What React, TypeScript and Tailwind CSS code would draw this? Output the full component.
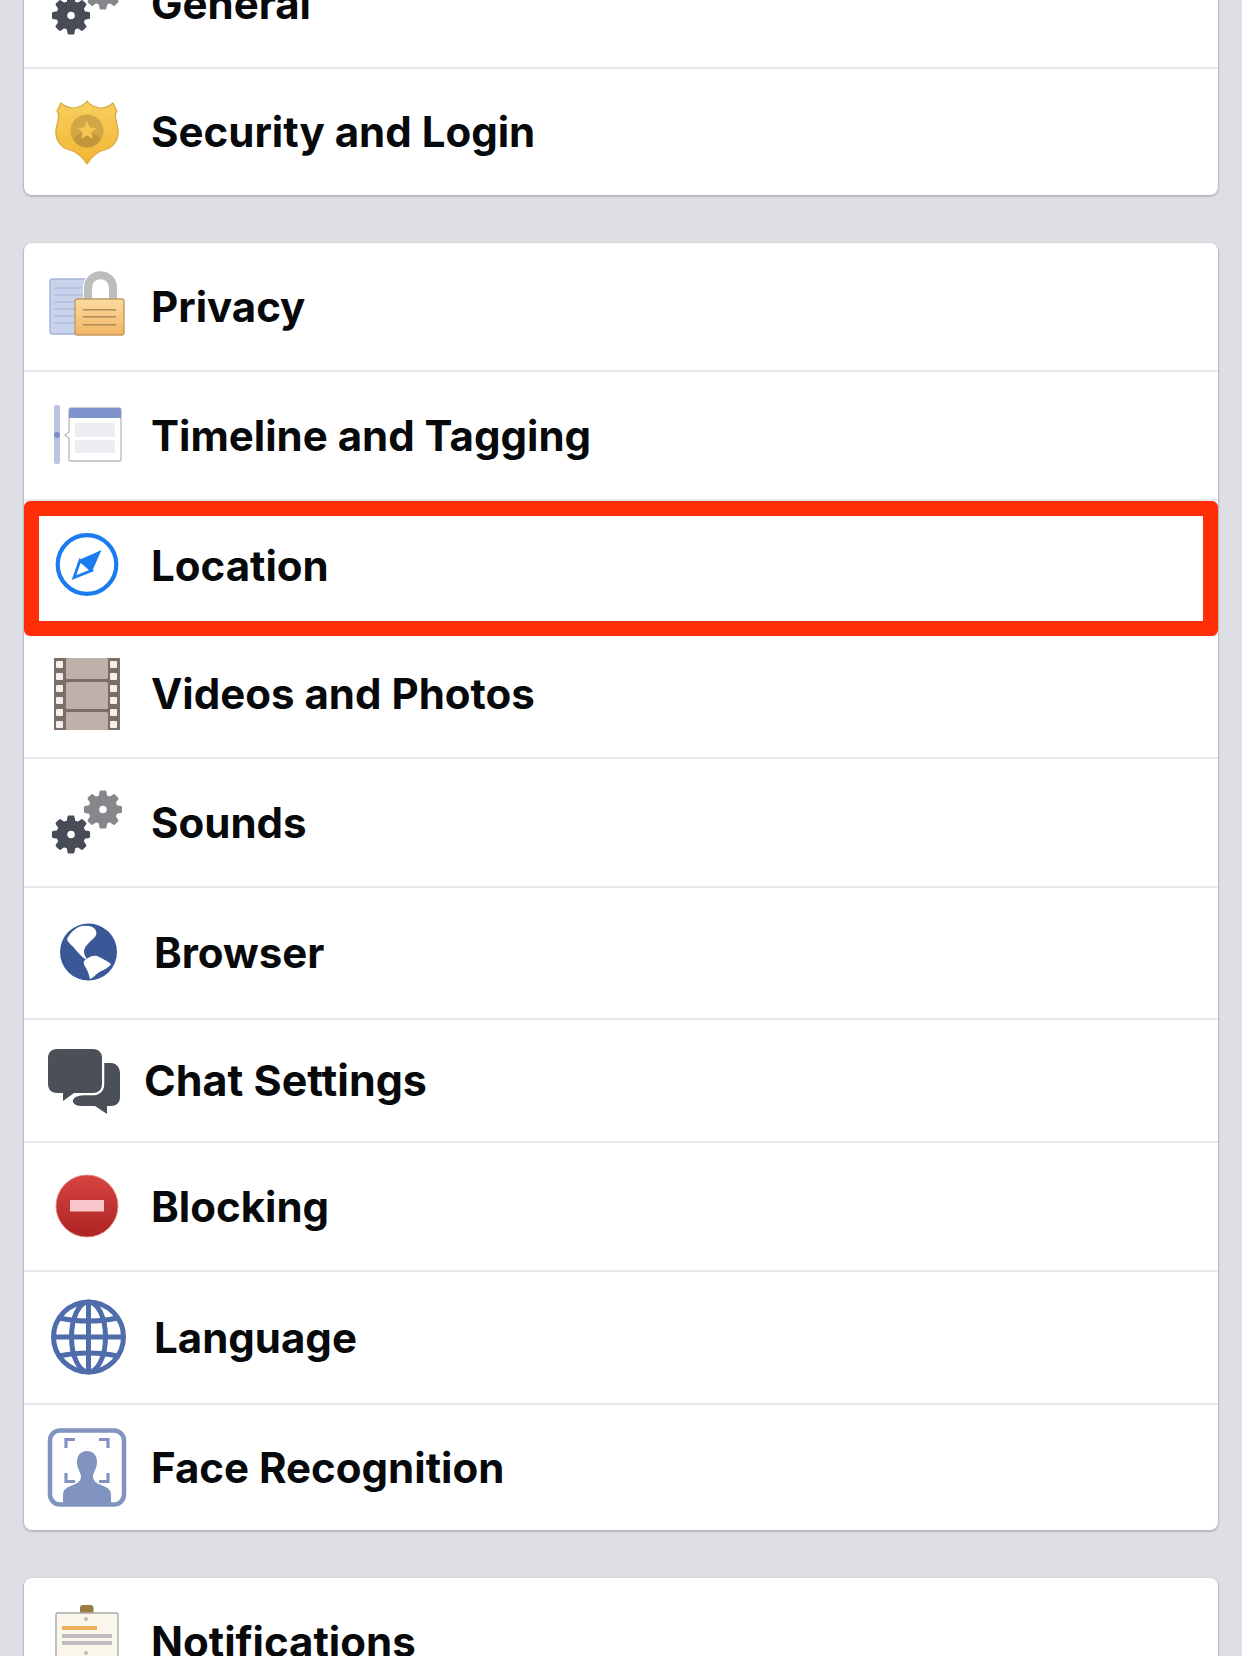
import React from "react";

function gear(cx: number, cy: number, R: number, r: number, n: number, hole: number) {
  const pts: string[] = [];
  for (let i = 0; i < n; i++) {
    const a = (i / n) * Math.PI * 2 - Math.PI / 2;
    const w = (Math.PI * 2) / n;
    const p = (rad: number, t: number) => `${(cx + rad * Math.cos(t)).toFixed(2)} ${(cy + rad * Math.sin(t)).toFixed(2)}`;
    pts.push(`${i === 0 ? "M" : "L"}${p(r, a - w * 0.3)}`);
    pts.push(`L${p(R, a - w * 0.16)}`);
    pts.push(`L${p(R, a + w * 0.16)}`);
    pts.push(`L${p(r, a + w * 0.3)}`);
  }
  pts.push("Z");
  pts.push(`M${cx - hole} ${cy}a${hole} ${hole} 0 1 0 ${hole * 2} 0a${hole} ${hole} 0 1 0 ${-hole * 2} 0Z`);
  return pts.join("");
}

const Box = ({ children, defs }: { children: React.ReactNode; defs?: React.ReactNode }) => (
  <svg width="84" height="84" viewBox="-42 -42 84 84" className="block overflow-visible">
    {defs ? <defs>{defs}</defs> : null}
    {children}
  </svg>
);

const Gears = () => (
  <Box>
    <path d={gear(16, -13.5, 18, 13.5, 8, 5)} fill="#85878b" fillRule="evenodd" stroke="#85878b" strokeWidth="2.4" strokeLinejoin="round" />
    <path d={gear(-16, 11.5, 18, 13.5, 8, 5)} fill="#474c57" fillRule="evenodd" stroke="#474c57" strokeWidth="2.4" strokeLinejoin="round" />
  </Box>
);

const Shield = () => (
  <Box
    defs={
      <linearGradient id="sh" x1="0" y1="0" x2="0" y2="1">
        <stop offset="0" stopColor="#f7cf5e" />
        <stop offset="1" stopColor="#f2b632" />
      </linearGradient>
    }
  >
    <path d="M-26 -29 C-21 -24 -14 -23 -9 -25 C-5 -26 -2 -28 0 -31 C2 -28 5 -26 9 -25 C14 -23 21 -24 26 -29 L30 -21 C26 -17 30 -9 31 -3 C32 6 28 14 20 17 C12 19 5 24 0 32 C-5 24 -12 19 -20 17 C-28 14 -32 6 -31 -3 C-30 -9 -26 -17 -30 -21 Z" fill="url(#sh)" stroke="#d8a941" strokeWidth="1.2" strokeLinejoin="round" />
    <circle cx="0" cy="-1" r="16.5" fill="#d2a745" />
    <path d="M-14 7 C-9 1 -4 0 0 0 C4 0 9 1 14 7 C10 13 5 15.5 0 15.5 C-5 15.5 -10 13 -14 7 Z" fill="#c2963a" />
    <path d="M0 -11 L2.8 -4.6 L9.5 -4 L4.4 .4 L6 7 L0 3.5 L-6 7 L-4.4 .4 L-9.5 -4 L-2.8 -4.6 Z" fill="#f3c653" />
  </Box>
);

const Lock = () => (
  <Box
    defs={
      <linearGradient id="lk" x1="0" y1="0" x2="0" y2="1">
        <stop offset="0" stopColor="#fbdca0" />
        <stop offset="1" stopColor="#f1b563" />
      </linearGradient>
    }
  >
    <rect x="-37" y="-28" width="40" height="55" rx="2.5" fill="#c9d3ec" stroke="#a7b3d8" strokeWidth="1.4" />
    {[-20, -13, -6, 1, 8, 15].map((y) => (
      <rect key={y} x="-33" y={y} width="30" height="2" fill="#b7c3e0" />
    ))}
    <path d="M1 -6 V-19 C1 -36 26 -36 26 -19 V-6" fill="none" stroke="#fff" strokeWidth="10" />
    <path d="M1 -6 V-19 C1 -36 26 -36 26 -19 V-6" fill="none" stroke="#bdbdbf" strokeWidth="8" />
    <rect x="-12" y="-8" width="49" height="36" rx="2.5" fill="url(#lk)" stroke="#c29a63" strokeWidth="1.4" />
    {[2, 9, 17].map((y) => (
      <rect key={y} x="-4" y={y} width="33" height="1.6" fill="#b18d58" />
    ))}
  </Box>
);

const TimelineIcon = () => (
  <Box>
    <rect x="-33" y="-31" width="6" height="59" rx="2" fill="#bcc5e0" />
    <circle cx="-30" cy="-1" r="3" fill="#7d8ec5" />
    <path d="M-18 -26 a2 2 0 0 1 2 -2 h48 a2 2 0 0 1 2 2 v49 a2 2 0 0 1 -2 2 h-48 a2 2 0 0 1 -2 -2 v-21 l-4 -3 l4 -3 Z" fill="#fff" stroke="#b9bcc2" strokeWidth="1.4" />
    <path d="M-18 -26 a2 2 0 0 1 2 -2 h48 a2 2 0 0 1 2 2 v8 h-52 Z" fill="#7f94cc" />
    <rect x="-12" y="-13" width="40" height="14" fill="#eceef1" />
    <rect x="-12" y="4" width="40" height="13" fill="#eceef1" />
  </Box>
);

const Compass = () => (
  <Box>
    <g transform="translate(0 -1.5)">
      <circle cx="0" cy="0" r="29.3" fill="none" stroke="#1a7cf0" strokeWidth="4.2" />
      <path d="M14.5 -14.5 L-8 -4.5 L5 7 Z" fill="#1a7cf0" />
      <path d="M-7 -4 L-13 13 L4.5 6 Z" fill="#fff" stroke="#1a7cf0" strokeWidth="2.8" strokeLinejoin="miter" />
    </g>
  </Box>
);

const Film = () => (
  <Box>
    <rect x="-33" y="-36" width="66" height="72" fill="#7b6e67" />
    <rect x="-21" y="-36" width="42" height="21" rx="1.5" fill="#bdb1a9" />
    <rect x="-21" y="-12" width="42" height="27" rx="1.5" fill="#bdb1a9" />
    <rect x="-21" y="18" width="42" height="18" rx="1.5" fill="#bdb1a9" />
    {[-33, -21, -9, 3, 15, 27].map((y) => (
      <React.Fragment key={y}>
        <rect x="-31" y={y} width="7" height="7" rx="1" fill="#f3efec" />
        <rect x="23" y={y} width="7" height="7" rx="1" fill="#f3efec" />
      </React.Fragment>
    ))}
  </Box>
);

const Globe = () => (
  <Box>
    <circle cx="1.5" cy="-1" r="28.5" fill="#3a5897" />
    <path d="M-20 -14 C-16 -22 -10 -26 -5 -27 C0 -28 6 -27 8 -24 C10 -21 10 -18 7 -15 C4 -13 2 -10 0 -8 C-2 -6 -3 -4 -3 -1 C-3 2 -1 4 0 7 C-4 5 -8 1 -12 -4 C-15 -8 -19 -10 -20 -14 Z" fill="#fff" />
    <path d="M-3 8 C1 4 6 2 10 3 C15 5 20 8 24 11 C21 16 15 17 11 20 C8 22 6 25 3 26 C2 22 1 19 0 17 C-2 13 -4 11 -3 8 Z" fill="#fff" />
  </Box>
);

const bubble1 = "M-30 -32 H6 C12 -32 15 -28 15 -23 V3 C15 9 11 12 6 12 H-13 L-24 20 V12 H-30 C-36 12 -39 8 -39 3 V-23 C-39 -28 -36 -32 -30 -32 Z";

const Chat = () => (
  <Box>
    <path d="M8 -18 H24 C30 -18 33 -13 33 -7 V16 C33 22 29 25 24 25 H20 V33 L8 25 H-6 C-11 25 -15 22 -14 19 C-13 16 -8 14 0 14 Z" fill="#4b4f57" />
    <path d={bubble1} fill="#4b4f57" stroke="#fff" strokeWidth="4.5" strokeLinejoin="round" paintOrder="stroke" />
  </Box>
);

const Block = () => (
  <Box
    defs={
      <linearGradient id="bl" x1="0" y1="0" x2="0" y2="1">
        <stop offset="0" stopColor="#d64540" />
        <stop offset="1" stopColor="#ad2424" />
      </linearGradient>
    }
  >
    <circle cx="0" cy="-1" r="31" fill="url(#bl)" stroke="#e58f88" strokeWidth=".8" />
    <rect x="-17" y="-7" width="34" height="11.5" fill="#f8c6ca" />
  </Box>
);

const Grid = () => (
  <Box>
    <g fill="none" stroke="#4f6dab" strokeWidth="5" transform="translate(1.5 -1)">
      <circle cx="0" cy="0" r="35" />
      <ellipse cx="0" cy="0" rx="17" ry="35" />
      <line x1="0" y1="-35" x2="0" y2="35" />
      <line x1="-35" y1="0" x2="35" y2="0" />
      <path d="M-29 -19 C-12 -15 12 -15 29 -19" />
      <path d="M-29 19 C-12 15 12 15 29 19" />
    </g>
  </Box>
);

const Face = () => (
  <Box>
    <rect x="-37" y="-37.5" width="74" height="74" rx="10" fill="#fff" stroke="#8094bf" strokeWidth="4.5" />
    <g fill="none" stroke="#8094bf" strokeWidth="3.2">
      <path d="M-21 -20 V-28.5 H-12" />
      <path d="M21 -20 V-28.5 H12" />
      <path d="M-21 5 V13.5 H-12" />
      <path d="M21 5 V13.5 H12" />
    </g>
    <path d="M0 -17 C7 -17 10 -12 10 -6 C10 0 7 3 6 8 C6 13 9 15 15 17.5 C21 19.5 24 22 24 27 V36 H-24 V27 C-24 22 -21 19.5 -15 17.5 C-9 15 -6 13 -6 8 C-7 3 -10 0 -10 -6 C-10 -12 -7 -17 0 -17 Z" fill="#8094bf" />
  </Box>
);

const Clip = () => (
  <Box>
    <rect x="-7" y="-37" width="13.5" height="10" rx="3" fill="#9a7b45" />
    <rect x="-31" y="-29" width="62" height="70" rx="1.5" fill="#fbf6ea" stroke="#a9a9a9" strokeWidth="1.4" />
    <circle cx="-1" cy="-23" r="2" fill="#c0c0c0" />
    <rect x="-25" y="-16" width="35" height="4" fill="#eeae5e" />
    <rect x="-25" y="-8" width="50" height="4" fill="#bcbcbc" />
    <rect x="-25" y="-1" width="50" height="4" fill="#bcbcbc" />
    <circle cx="-1" cy="11" r="2" fill="#c0c0c0" />
  </Box>
);

function Row({
  icon,
  label,
  rowClass,
  textClass,
  labelClass,
  last,
  framed,
}: {
  icon: React.ReactNode;
  label: string;
  rowClass: string;
  textClass: string;
  labelClass?: string;
  last?: boolean;
  framed?: boolean;
}) {
  return (
    <div className={`relative flex items-center ${rowClass} ${last ? "" : "border-b-2 border-[#e8e9eb]"}`}>
      <div className={`flex shrink-0 pl-[21px] ${textClass}`}>{icon}</div>
      <span className={`leading-none font-[650] text-[#08090b] whitespace-nowrap ${labelClass ?? "text-[42px]"}`}>{label}</span>
      {framed ? (
        <div className="absolute left-0 right-0 top-0 -bottom-[6px] z-10 rounded-[6px] border-[15px] border-[#ff2d08]" />
      ) : null}
    </div>
  );
}

const cardClass = "rounded-[8px] bg-white shadow-[0_1px_1.5px_1px_rgba(120,125,135,0.4)]";

export default function App() {
  return (
    <div
      className="flex h-[1656px] w-[1242px] flex-col gap-[48px] overflow-hidden bg-[#dddfe4] px-[24px]"
      style={{ fontFamily: 'Inter, "Liberation Sans", sans-serif' }}
    >
      <div className={`-mt-[59px] shrink-0 ${cardClass}`}>
        <Row icon={<Gears />} label="General" rowClass="h-[128px]" textClass="w-[127px]" />
        <Row icon={<Shield />} label="Security and Login" rowClass="h-[126px]" textClass="w-[127px]" last />
      </div>
      <div className={`shrink-0 ${cardClass}`}>
        <Row icon={<Lock />} label="Privacy" rowClass="h-[129px]" textClass="w-[127px]" />
        <Row icon={<TimelineIcon />} label="Timeline and Tagging" rowClass="h-[129px]" textClass="w-[127px]" />
        <Row icon={<Compass />} label="Location" rowClass="h-[129px]" textClass="w-[127px]" last framed />
        <Row icon={<Film />} label="Videos and Photos" rowClass="h-[129px]" textClass="w-[127px]" />
        <Row icon={<Gears />} label="Sounds" rowClass="h-[129px]" textClass="w-[127px]" />
        <Row icon={<Globe />} label="Browser" rowClass="h-[132px]" textClass="w-[130px]" />
        <Row icon={<Chat />} label="Chat Settings" rowClass="h-[123px]" textClass="w-[120px]" labelClass="text-[43px]" />
        <Row icon={<Block />} label="Blocking" rowClass="h-[129px]" textClass="w-[127px]" />
        <Row icon={<Grid />} label="Language" rowClass="h-[133px]" textClass="w-[130px]" />
        <Row icon={<Face />} label="Face Recognition" rowClass="h-[125px]" textClass="w-[127px]" last />
      </div>
      <div className={`shrink-0 ${cardClass}`}>
        <Row icon={<Clip />} label="Notifications" rowClass="h-[128px]" textClass="w-[127px]" last />
      </div>
    </div>
  );
}
